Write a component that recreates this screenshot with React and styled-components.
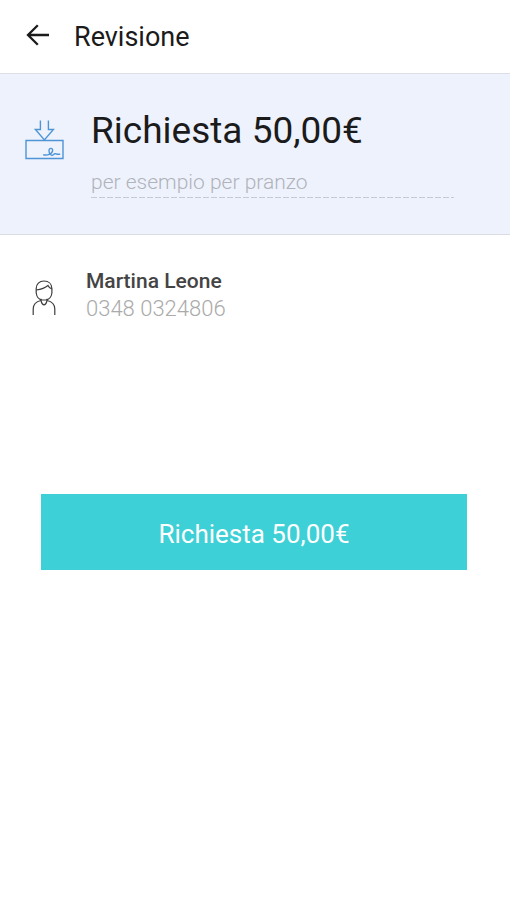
import React, { Component, Fragment } from "react";
import styled, { createGlobalStyle } from "styled-components";

const initState = {
  note: "",
};

export default class ReviewRequest extends Component {
  state = initState;

  handleNoteChange = (e) => {
    this.setState({
      note: e.target.value,
    });
  };

  handleSubmit = (e) => {
    e.preventDefault();
    this.setState(initState);
  };

  render() {
    return (
      <Fragment>
        <GlobalStyle />
        <Header>
          <BackButton type="button" aria-label="Indietro">
            <BackIcon />
          </BackButton>
          <HeaderTitle>Revisione</HeaderTitle>
        </Header>
        <form onSubmit={this.handleSubmit}>
          <Summary>
            <RequestIcon />
            <SummaryBody>
              <Amount>Richiesta 50,00€</Amount>
              <NoteInput
                type="text"
                aria-label="Nota"
                placeholder="per esempio per pranzo"
                value={this.state.note}
                onChange={this.handleNoteChange}
              />
            </SummaryBody>
          </Summary>
          <Contact>
            <PersonIcon />
            <div>
              <ContactName>Martina Leone</ContactName>
              <ContactPhone>0348 0324806</ContactPhone>
            </div>
          </Contact>
          <Actions>
            <SubmitButton type="submit">Richiesta 50,00€</SubmitButton>
          </Actions>
        </form>
      </Fragment>
    );
  }
}

// icons
const BackIcon = () => (
  <svg width="24" height="24" viewBox="0 0 24 24" fill="none">
    <path
      d="M23 12H2M11.8 2.2L2 12l9.8 9.8"
      stroke="#1b1b1b"
      strokeWidth="2.3"
    />
  </svg>
);

const RequestIcon = () => (
  <svg
    width="40"
    height="40"
    viewBox="0 0 40 40"
    fill="none"
    stroke="#4f95d6"
    strokeWidth="1.4"
  >
    <path d="M16.400 .5v9h-5L20.400 20l9-10.500h-5V.5" />
    <path d="M2 20.500h37v18H2z" />
    <path d="M19.200 34.800c5 .8 9.400-1.200 9.400-4.600 0-2.600-3.600-2.400-3.600.600 0 4.200 3 5.200 4.600 3.600 1-1.200 1.800-.8 2.800-.4 1.200.5 2.200.2 3.800.2" />
  </svg>
);

const PersonIcon = () => (
  <svg
    width="24"
    height="36"
    viewBox="0 0 24 36"
    fill="none"
    stroke="#3c3c3c"
    strokeWidth="1.2"
  >
    <path d="M4.200 13V8.500C4.200 4 7.300 1 12 1s7.900 3 7.900 7.500V13" />
    <path d="M4.200 10C9 9.300 13 8 16 5.500c.9 2 2 3 3.900 3.500" />
    <path d="M4.200 13c.4 3.200 2.600 6.500 5.800 7h4c3.200-.5 5.500-3.800 5.900-7" />
    <path d="M9 18.800v1.700c.6 2.800 1.600 4.300 3 4.300s2.400-1.500 3-4.300v-1.700" />
    <path d="M1.200 35v-6c0-4.400 3-7.400 7.800-8.500M22.800 35v-6c0-4.400-3-7.400-7.800-8.500" />
  </svg>
);

const GlobalStyle = createGlobalStyle`
  * {
    box-sizing: border-box;
  }
  body {
    margin: 0;
    background: #fff;
    color: #1b1b1b;
    font-family: Roboto, "Liberation Sans", sans-serif;
  }
  h1, h2, h3, p {
    margin: 0;
    font-weight: 400;
  }
  svg {
    display: block;
    flex-shrink: 0;
  }
`;

const Header = styled.header`
  display: flex;
  align-items: center;
  gap: 24px;
  height: 74px;
  padding: 0 26px;
  border-bottom: 1px solid #dcdfe6;
`;

const BackButton = styled.button`
  padding: 0 0 4px;
  border: 0;
  background: none;
  cursor: pointer;
`;

const HeaderTitle = styled.h1`
  font-size: 27px;
  line-height: 32px;
`;

const Summary = styled.section`
  display: flex;
  gap: 27px;
  padding: 35px 56px 36px 24px;
  background: #eef2fd;
  border-bottom: 1px solid #dadde4;

  svg {
    margin-top: 11px;
  }
`;

const SummaryBody = styled.div`
  flex: 1;
  min-width: 0;
`;

const Amount = styled.h2`
  font-size: 37px;
  line-height: 44px;
`;

const NoteInput = styled.input`
  display: block;
  width: 100%;
  height: 45px;
  padding: 12px 0 0;
  border: 0;
  outline: none;
  color: #1b1b1b;
  font-family: inherit;
  font-size: 21px;
  font-weight: 300;
  background: repeating-linear-gradient(
      to right,
      #c6cad3 0 6px,
      transparent 6px 8px
    )
    bottom / 100% 1px no-repeat;

  &::placeholder {
    color: #b0b3ba;
    opacity: 1;
  }
`;

const Contact = styled.section`
  display: flex;
  align-items: center;
  gap: 30px;
  padding: 32px 32px 0;

  svg {
    margin-top: 5px;
  }
`;

const ContactName = styled.h3`
  font-size: 21px;
  line-height: 28px;
  font-weight: 500;
  color: #444;
`;

const ContactPhone = styled.p`
  font-size: 22px;
  line-height: 28px;
  font-weight: 300;
  color: #aaa;
`;

const Actions = styled.div`
  padding: 171px 43px 0 41px;
`;

const SubmitButton = styled.button`
  width: 100%;
  height: 76px;
  padding: 4px 0 0;
  border: 0;
  color: #fff;
  background: #3dd0d6;
  font-family: inherit;
  font-size: 26px;
  cursor: pointer;
`;
